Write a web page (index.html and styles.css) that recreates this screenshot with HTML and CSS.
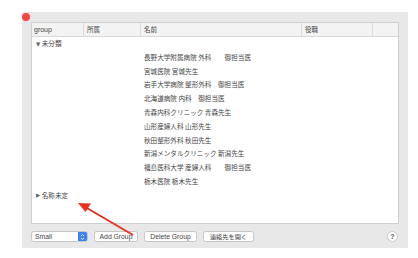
FILE: index.html
```html
<!DOCTYPE html>
<html lang="ja">
<head>
<meta charset="utf-8">
<link rel="stylesheet" href="styles.css">
</head>
<body>
<div class="dot"></div>
<div class="window">
  <div class="table">
    <div class="head">
      <div class="hc c1">group</div>
      <div class="hc c2">所属</div>
      <div class="hc c3">名前</div>
      <div class="hc c4">役職</div>
      <div class="hc c5"></div>
    </div>
    <div class="body">
      <div class="row grp"><span class="tri">▼</span>未分類</div>
      <div class="row item">長野大学附属病院 外科　　御担当医</div>
      <div class="row item">宮城医院 宮城先生</div>
      <div class="row item">岩手大学病院 整形外科　御担当医</div>
      <div class="row item">北海道病院 内科　御担当医</div>
      <div class="row item">青森内科クリニック 青森先生</div>
      <div class="row item">山形産婦人科 山形先生</div>
      <div class="row item">秋田整形外科 秋田先生</div>
      <div class="row item">新潟メンタルクリニック 新潟先生</div>
      <div class="row item">福島医科大学 産婦人科　　御担当医</div>
      <div class="row item">栃木医院 栃木先生</div>
      <div class="row grp"><span class="tri">▶</span>名称未定</div>
    </div>
  </div>
  <div class="footer">
    <div class="popup"><span class="plabel">Small</span><span class="stepper"><svg width="5" height="8" viewBox="0 0 5 8"><path d="M1 3 L2.5 1.5 L4 3 M1 5 L2.5 6.5 L4 5" fill="none" stroke="#fff" stroke-width="0.9"/></svg></span></div>
    <div class="btn b1">Add Group</div>
    <div class="btn b2">Delete Group</div>
    <div class="btn b3">連絡先を開く</div>
    <div class="spacer"></div>
    <div class="help">?</div>
  </div>
</div>
<svg class="arrow" width="418" height="258" viewBox="0 0 418 258">
  <line x1="133" y1="235" x2="86" y2="207.5" stroke="#e8321f" stroke-width="2"/>
  <polygon points="78,203 91,203.5 85.5,212" fill="#e8321f"/>
</svg>
</body>
</html>
```
FILE: styles.css
```css
html, body {
  margin: 0;
  padding: 0;
  background: #ffffff;
}
body {
  width: 418px;
  height: 258px;
  position: relative;
  overflow: hidden;
  font-family: "Liberation Sans", "Noto Sans CJK JP", sans-serif;
  color: #444;
}
.dot {
  position: absolute;
  left: 22px;
  top: 13px;
  width: 8px;
  height: 8px;
  border-radius: 50%;
  background: #f4473f;
}
.window {
  margin: 12px 0 0 22px;
  width: 386px;
  height: 236px;
  background: #e8e8e8;
  padding: 10px 9px 0 9px;
  box-sizing: border-box;
  display: flex;
  flex-direction: column;
}
.table {
  height: 202px;
  background: #fff;
  border: 1px solid #cfcfcf;
  box-sizing: border-box;
  display: flex;
  flex-direction: column;
}
.head {
  display: flex;
  height: 13px;
  background: #f3f3f3;
  border-bottom: 1px solid #d9d9d9;
  flex: none;
}
.hc {
  font-size: 6.5px;
  line-height: 13px;
  padding-left: 3px;
  box-sizing: border-box;
  border-right: 1px solid #dcdcdc;
  color: #444;
}
.c1 { width: 52px; padding-left: 2px; font-size: 7px; }
.c2 { width: 57px; font-family: "Noto Sans CJK JP", sans-serif; }
.c3 { width: 161px; font-family: "Noto Sans CJK JP", sans-serif; }
.c4 { width: 71px; font-family: "Noto Sans CJK JP", sans-serif; }
.c5 { flex: 1; border-right: none; }
.row {
  height: 13.8px;
  line-height: 13.8px;
  font-size: 6.6px;
  white-space: pre;
  font-family: "Noto Sans CJK JP", sans-serif;
  color: #444;
}
.grp {
  padding-left: 4px;
}
.tri {
  font-size: 5.5px;
  color: #666;
  margin-right: 1.5px;
  font-family: "DejaVu Sans", sans-serif;
  vertical-align: 0.5px;
}
.item {
  padding-left: 112px;
}
.footer {
  display: flex;
  align-items: center;
  height: 24px;
  gap: 6px;
  padding-top: 1px;
  box-sizing: border-box;
}
.popup {
  width: 57px;
  height: 11px;
  background: #fff;
  border: 1px solid #c6c6c6;
  border-radius: 2.5px;
  box-sizing: border-box;
  display: flex;
  align-items: stretch;
  overflow: hidden;
}
.plabel {
  flex: 1;
  font-size: 6.8px;
  line-height: 9px;
  padding-left: 3px;
}
.stepper {
  width: 9px;
  background: #3b82f7;
  display: flex;
  align-items: center;
  justify-content: center;
}
.btn {
  height: 11px;
  background: #fff;
  border: 1px solid #c6c6c6;
  border-radius: 2.5px;
  box-sizing: border-box;
  font-size: 6.8px;
  line-height: 9px;
  text-align: center;
  color: #444;
}
.b1 { width: 44px; }
.b2 { width: 53px; }
.b3 { width: 51px; font-family: "Noto Sans CJK JP", sans-serif; font-size: 6.2px; }
.spacer { flex: 1; }
.help {
  width: 11px;
  height: 11px;
  border-radius: 50%;
  background: #fff;
  border: 1px solid #c9c9c9;
  box-sizing: border-box;
  font-size: 7px;
  font-weight: bold;
  line-height: 9px;
  text-align: center;
  color: #555;
  margin-right: 1px;
}
.arrow {
  position: absolute;
  left: 0;
  top: 0;
  pointer-events: none;
}
```
